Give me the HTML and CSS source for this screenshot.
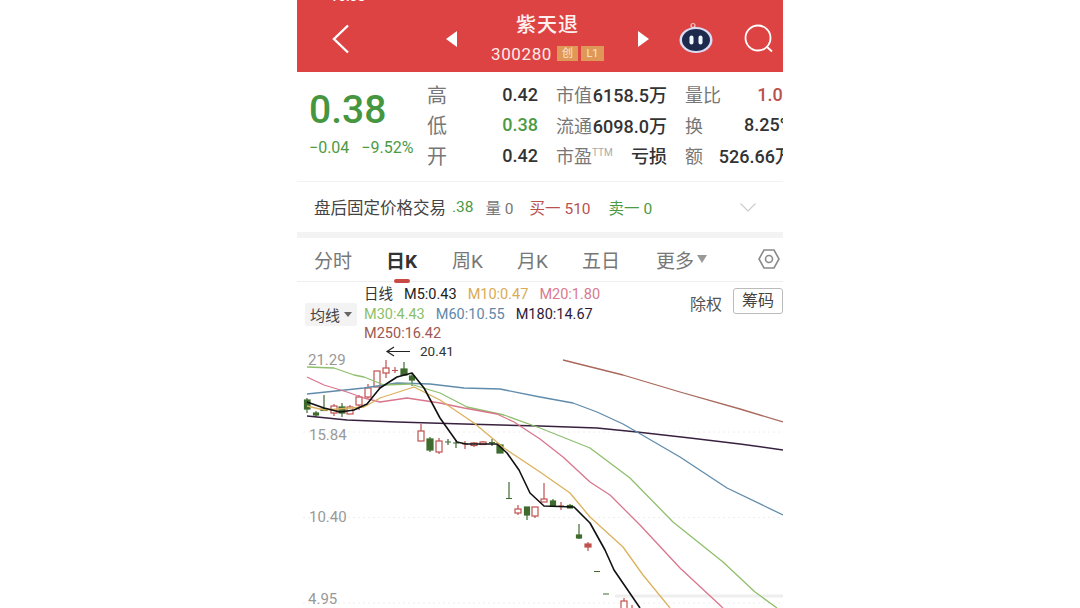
FILE: index.html

```html
<!DOCTYPE html>
<html lang="zh-CN">
<head>
    <meta charset="UTF-8">
    <meta name="viewport" content="width=device-width, initial-scale=1.0">
    <title>紫天退 300280</title>
    <link rel="stylesheet" href="styles.css">
</head>
<body>
    <div class="phone">
        <header class="topbar">
            <span class="status">10:38</span>
            <svg class="back" width="18" height="30" viewBox="0 0 18 30"><path d="M16 1.500 2 15l14 13.500"/></svg>
            <span class="tri tri-left"></span>
            <div class="title-box">
                <div class="name">紫天退</div>
                <div class="code-row">
                    <span class="code">300280</span>
                    <span class="badge badge-cy">创</span>
                    <span class="badge badge-l1">L1</span>
                </div>
            </div>
            <span class="tri tri-right"></span>
            <svg class="robot" width="34" height="32" viewBox="0 0 34 32">
                <circle cx="14" cy="3.500" r="2" fill="none" stroke="#f3c4c4" stroke-width="1.200"/>
                <path d="M15 4.500 19 8" stroke="#f3d8d8" stroke-width="1.500"/>
                <ellipse cx="17" cy="18" rx="16.500" ry="13" fill="#d9dcf4"/>
                <ellipse cx="17" cy="18" rx="14" ry="11" fill="#1d2a4c"/>
                <rect x="10.500" y="13.500" width="4" height="9" rx="2" fill="#f4f6ff"/>
                <rect x="19.500" y="13.500" width="4" height="9" rx="2" fill="#f4f6ff"/>
            </svg>
            <svg class="search" width="30" height="30" viewBox="0 0 30 30"><circle cx="14" cy="14" r="12.500"/><path d="M23 23l5 4.500"/></svg>
        </header>

        <section class="quote">
            <div class="price-box">
                <div class="price">0.38</div>
                <div class="change"><span>−0.04</span><span>−9.52%</span></div>
            </div>
            <div class="stats">
                <div class="stat"><span class="lbl big">高</span><span class="val">0.42</span></div>
                <div class="stat"><span class="lbl">市值</span><span class="val">6158.5万</span></div>
                <div class="stat"><span class="lbl">量比</span><span class="val red">1.03</span></div>
                <div class="stat"><span class="lbl big">低</span><span class="val green">0.38</span></div>
                <div class="stat"><span class="lbl">流通</span><span class="val">6098.0万</span></div>
                <div class="stat"><span class="lbl">换</span><span class="val">8.25%</span></div>
                <div class="stat"><span class="lbl big">开</span><span class="val">0.42</span></div>
                <div class="stat"><span class="lbl">市盈<sup>TTM</sup></span><span class="val">亏损</span></div>
                <div class="stat"><span class="lbl">额</span><span class="val">526.66万</span></div>
            </div>
        </section>

        <section class="after">
            <span class="after-name">盘后固定价格交易</span>
            <span class="green after-price">.38</span>
            <span class="after-vol">量 0</span>
            <span class="red after-buy">买一 510</span>
            <span class="green after-sell">卖一 0</span>
            <svg class="chev" width="16" height="9" viewBox="0 0 16 9"><path d="M.5 .5 8 8 15.500 .5"/></svg>
        </section>

        <nav class="tabs">
            <span class="tab">分时</span>
            <span class="tab active">日K</span>
            <span class="tab">周K</span>
            <span class="tab">月K</span>
            <span class="tab">五日</span>
            <span class="tab more">更多<i class="more-tri"></i></span>
            <svg class="hex" width="22" height="22" viewBox="0 0 22 22"><path d="M6 2h10l5 9-5 9H6l-5-9z"/><circle cx="11" cy="11" r="3.500"/></svg>
        </nav>

        <section class="legend">
            <div class="ma-btn">均线<i class="ma-tri"></i></div>
            <div class="ma-list">
                <div class="ma-row"><span class="dark">日线</span><span class="c5">M5:0.43</span><span class="c10">M10:0.47</span><span class="c20">M20:1.80</span></div>
                <div class="ma-row"><span class="c30">M30:4.43</span><span class="c60">M60:10.55</span><span class="c180">M180:14.67</span></div>
                <div class="ma-row"><span class="c250">M250:16.42</span></div>
            </div>
            <span class="fq">除权</span>
            <span class="chip">筹码</span>
        </section>

        <div class="chart">
            <svg class="plot" width="486" height="262" viewBox="297 346 486 262">
                <g class="grid">
                    <path d="M303 432H783M303 517.500H783M303 603H783"/>
                </g>
                <path class="band" d="M615 596H783"/>
                <g class="labels">
                    <text x="308" y="365">21.29</text>
                    <text x="309" y="440">15.84</text>
                    <text x="309" y="522">10.40</text>
                    <text x="308" y="604">4.95</text>
                </g>
                <path class="arrow" d="M410 351.500H387M394 347l-7 4.500 7 4.500"/>
                <text class="peak" x="420" y="356">20.41</text>

                <g class="up">
                    <path d="M334 404V416"/><rect x="331" y="406" width="6" height="7"/>
                    <path d="M350 405V414"/><rect x="347" y="407" width="6" height="7"/>
                    <path d="M359 395V410"/><rect x="356" y="397" width="6" height="8"/>
                    <path d="M368 384V398"/><rect x="365" y="388" width="6" height="9"/>
                    <path d="M377 371V387"/><rect x="374" y="371" width="6" height="16"/>
                    <path d="M386 360V378"/><rect x="383" y="368" width="6" height="5"/>
                    <path d="M395 367V373M392 370.500H398"/>
                    <path d="M421 424V431"/><rect x="418" y="431" width="6" height="10"/>
                    <path d="M439 438V454"/><rect x="436" y="441" width="6" height="11"/>
                    <path d="M465 441V449M462 444H468"/>
                    <path d="M474 442V447"/><rect x="471" y="443" width="6" height="2.500"/>
                    <path d="M483 441V445"/><rect x="480" y="442" width="6" height="2.500"/>
                    <path d="M518 505V515"/><rect x="515" y="509" width="6" height="4"/>
                    <path d="M535 516V518"/><rect x="532" y="507" width="6" height="9"/>
                    <path d="M544 483V499"/><rect x="541" y="499" width="6" height="3"/>
                    <path d="M561 502V510M558 506H564"/>
                    <path d="M588 542V551"/><rect class="solid" x="585" y="544" width="6" height="3"/>
                    <path d="M624 598V601"/><rect x="621" y="601" width="6" height="9"/>
                    <path d="M632 605V610"/>
                </g>
                <g class="down">
                    <path d="M307 398V413"/><rect x="304.500" y="400" width="5.500" height="9"/>
                    <path d="M316 411V417"/><rect x="313.500" y="413" width="5" height="2"/>
                    <path d="M324 395V410"/><rect x="321" y="409" width="6" height="1.500"/>
                    <path d="M342 403V417"/><rect x="339" y="407" width="6" height="6"/>
                    <path d="M404 362V375"/><rect x="401" y="369" width="6" height="6"/>
                    <path d="M412 373V386"/><rect x="409.500" y="376" width="5" height="4"/>
                    <path d="M430 437V452"/><rect x="427" y="439" width="6" height="11"/>
                    <path d="M448 439V445M445 442H451"/>
                    <path d="M456 440V448M453 443H459"/>
                    <path d="M492 439V446M489 442.500H495"/>
                    <path d="M500 444V453"/><rect x="497" y="445" width="6" height="8"/>
                    <path d="M509 482V498M506 498.500H512"/>
                    <path d="M527 507V520"/><rect x="524.500" y="507" width="5" height="8"/>
                    <path d="M553 499V507"/><rect x="550.500" y="501" width="5" height="5"/>
                    <path d="M570 504V508"/><rect x="567.500" y="505.500" width="5" height="2.500"/>
                    <path d="M579 524V539"/><rect x="576.500" y="535" width="5" height="3"/>
                    <path d="M594 571.500H600M603 594H609"/>
                </g>

                <polyline class="ma m250" points="563,360 623,375 680,392 740,409 783,422"/>
                <polyline class="ma m180" points="307,416 347,420 397,422 464,424 540,426 597,428 637,432 690,438 740,444 783,450"/>
                <polyline class="ma m60" points="307,394 364,388 397,383 430,384 464,388 500,389 540,397 573,403 597,412 623,424 637,432 680,457 727,488 783,515"/>
                <polyline class="ma m30" points="307,367 334,368 354,375 364,377 384,385 410,384 440,393 467,407 504,415 540,428 590,448 630,478 673,522 723,562 755,592 777,608"/>
                <polyline class="ma m20" points="307,377 324,385 347,392 364,398 380,402 407,398 440,403 464,408 497,414 514,422 540,439 563,457 590,482 610,495 640,525 680,568 723,608"/>
                <polyline class="ma m10" points="307,406 324,410 364,407 380,398 414,387 440,400 474,423 504,448 540,472 570,493 590,517 623,547 643,575 670,608"/>
                <polyline class="ma m5" points="307,402 324,408 340,412 354,410 367,404 380,388 397,377 412,373 424,388 440,418 457,442 466,444 497,444 507,453 519,470 530,493 544,506 574,507 590,523 605,550 614,570 640,608"/>
            </svg>
        </div>
    </div>
</body>
</html>
```

FILE: styles.css

```css
* { box-sizing: border-box; }
body { margin: 0; background-color: #fff; font-family: Roboto, "Noto Sans CJK SC", sans-serif; color: #333; }
.phone { width: 486px; height: 608px; margin: 0 auto; overflow: hidden; position: relative; background-color: #fff; }
.red { color: #b9524f; }
.green { color: #4d9a45; }

/* top bar */
.topbar { height: 72px; background-color: #de4343; display: flex; align-items: center; padding-left: 35px; color: #fff; position: relative; }
.status { position: absolute; left: 33px; top: -12px; font-size: 14px; font-weight: 500; }
.back { margin-top: 5px; flex: none; }
.back path { fill: none; stroke: #fff; stroke-width: 2.4; }
.tri { width: 0; height: 0; border-top: 8px solid transparent; border-bottom: 8px solid transparent; margin-top: 5px; flex: none; }
.tri-left { border-right: 11px solid #fff; margin-left: 96px; }
.tri-right { border-left: 11px solid #fff; }
.title-box { width: 181px; text-align: center; margin-top: 5px; }
.name { font-size: 20px; line-height: 28px; font-weight: 500; letter-spacing: 1px; color: #fdf0ef; }
.code-row { display: flex; justify-content: center; align-items: center; gap: 3px; height: 26px; margin-top: 2px; }
.code { font-size: 17px; letter-spacing: .6px; color: #fbe9e7; margin-right: 2px; }
.badge { height: 15px; line-height: 15px; font-size: 11px; background-color: #df9858; color: #fbe5cf; text-align: center; }
.badge-cy { width: 21px; }
.badge-l1 { width: 23px; }
.robot { margin-left: 30px; margin-top: 4px; flex: none; }
.search { margin-left: 31px; margin-top: 6px; flex: none; }
.search circle, .search path { fill: none; stroke: #fff; stroke-width: 1.8; }

/* price and stats */
.quote { height: 110px; display: flex; padding: 7px 0 0 12px; border-bottom: 1px solid #f2f2f2; }
.price-box { width: 118px; flex: none; }
.price { font-size: 39px; line-height: 46px; margin-top: 8px; font-weight: 500; color: #46953f; }
.change { display: flex; gap: 12px; font-size: 16px; line-height: 22px; margin-top: 4px; color: #4d9a45; white-space: nowrap; }
.stats { display: grid; grid-template-columns: 111px 111px 108px; grid-auto-rows: 30.5px; column-gap: 18px; flex: none; }
.stat { display: flex; justify-content: space-between; align-items: center; white-space: nowrap; }
.lbl { font-size: 18px; color: #777; }
.lbl.big { font-size: 20px; }
.lbl sup { font-size: 10px; color: #aaa; line-height: 0; }
.val { font-size: 18px; font-weight: 500; color: #333; }
.val.red { color: #b9524f; }
.val.green { color: #4d9a45; }

/* after hours row */
.after { height: 50px; display: flex; align-items: center; padding-left: 17px; font-size: 15.5px; white-space: nowrap; }
.after-name { font-size: 16.5px; color: #444; }
.after-price { margin-left: 6px; }
.after-vol { margin-left: 12px; color: #777; }
.after-buy { margin-left: 16px; }
.after-sell { margin-left: 18px; }
.chev { margin-left: 88px; }
.chev path { fill: none; stroke: #ccc; stroke-width: 1.2; }

/* period tabs */
.tabs { height: 50px; border-top: 6px solid #f3f3f3; border-bottom: 1px solid #eee; display: flex; align-items: center; padding: 0 0 1px 17px; font-size: 19px; color: #777; }
.tab { width: 65px; white-space: nowrap; position: relative; }
.tab:nth-child(1) { width: 72px; }
.tab.active { color: #333; font-weight: 700; width: 66px; }
.tab.active::after { content: ""; position: absolute; left: 8px; bottom: -10px; width: 16px; height: 4px; border-radius: 2px; background-color: #c94a45; }
.tab:nth-child(3) { width: 65px; }
.tab:nth-child(5) { width: 74px; }
.more { width: 102px; display: flex; align-items: center; }
.more-tri { width: 0; height: 0; border-left: 5px solid transparent; border-right: 5px solid transparent; border-top: 8px solid #999; margin-left: 3px; }
.hex path, .hex circle { fill: none; stroke: #8a8a8a; stroke-width: 1.6; }

/* legend */
.legend { height: 64px; display: flex; align-items: flex-start; padding-left: 8px; white-space: nowrap; }
.ma-btn { width: 53px; height: 23px; margin-top: 21px; background-color: #f3f3f3; border-radius: 2px; display: flex; align-items: center; justify-content: center; font-size: 15px; color: #444; }
.ma-tri { width: 0; height: 0; border-left: 4px solid transparent; border-right: 4px solid transparent; border-top: 5px solid #666; margin-left: 4px; }
.ma-list { margin-left: 7px; width: 332px; padding-top: 3px; font-size: 14.5px; line-height: 19.5px; }
.ma-row { display: flex; gap: 11px; }
.ma-row .dark { color: #333; margin-right: 0; }
.c5 { color: #222; }
.c10 { color: #d9ab55; }
.c20 { color: #d97a8e; }
.c30 { color: #8cc06a; }
.c60 { color: #5f88a8; }
.c180 { color: #2d1a3a; }
.c250 { color: #a0574f; }
.fq { font-size: 16px; color: #555; margin-top: 9px; }
.chip { margin-left: 11px; margin-top: 6px; width: 50px; height: 26px; line-height: 24px; border: 1px solid #bbb; border-radius: 3px; padding-left: 8px; font-size: 16px; color: #444; flex: none; }

/* chart */
.chart { height: 262px; }
.plot { display: block; }
.grid path { stroke: #eee; stroke-width: 1; stroke-dasharray: 2 3; fill: none; }
.band { stroke: #eeeeee; stroke-width: 3; }
.plot { border-top: 0; }
.labels text { font-size: 15px; fill: #999; }
.peak { font-size: 13.500px; fill: #333; }
.arrow { fill: none; stroke: #222; stroke-width: 1.2; }
.up path, .up rect { stroke: #c0504d; stroke-width: 1.2; fill: #fff; }
.up .solid { fill: #c0504d; }
.down path, .down rect { stroke: #3f6b2f; stroke-width: 1.2; fill: #3f6b2f; }
.ma { fill: none; stroke-width: 1.3; stroke-linejoin: round; }
.m5 { stroke: #111; stroke-width: 1.6; }
.m10 { stroke: #dcb15c; }
.m20 { stroke: #d9758c; }
.m30 { stroke: #8fbf6d; }
.m60 { stroke: #5f8cab; }
.m180 { stroke: #38213f; stroke-width: 1.5; }
.m250 { stroke: #a9685c; }
```
